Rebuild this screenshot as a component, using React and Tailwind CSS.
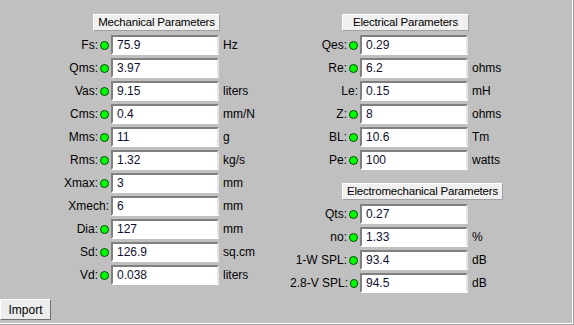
import React from "react";

const mechanical = [
	{ label: "Fs:", value: "75.9", unit: "Hz", led: true },
	{ label: "Qms:", value: "3.97", unit: "", led: true },
	{ label: "Vas:", value: "9.15", unit: "liters", led: true },
	{ label: "Cms:", value: "0.4", unit: "mm/N", led: true },
	{ label: "Mms:", value: "11", unit: "g", led: true },
	{ label: "Rms:", value: "1.32", unit: "kg/s", led: true },
	{ label: "Xmax:", value: "3", unit: "mm", led: true },
	{ label: "Xmech:", value: "6", unit: "mm", led: false },
	{ label: "Dia:", value: "127", unit: "mm", led: true },
	{ label: "Sd:", value: "126.9", unit: "sq.cm", led: true },
	{ label: "Vd:", value: "0.038", unit: "liters", led: true },
];

const electrical = [
	{ label: "Qes:", value: "0.29", unit: "", led: true },
	{ label: "Re:", value: "6.2", unit: "ohms", led: true },
	{ label: "Le:", value: "0.15", unit: "mH", led: false },
	{ label: "Z:", value: "8", unit: "ohms", led: true },
	{ label: "BL:", value: "10.6", unit: "Tm", led: true },
	{ label: "Pe:", value: "100", unit: "watts", led: true },
];

const electromechanical = [
	{ label: "Qts:", value: "0.27", unit: "", led: true },
	{ label: "no:", value: "1.33", unit: "%", led: true },
	{ label: "1-W SPL:", value: "93.4", unit: "dB", led: true },
	{ label: "2.8-V SPL:", value: "94.5", unit: "dB", led: true },
];

const Header = ({ children, className }) => (
	<div
		className={`h-[17px] flex items-center justify-center whitespace-nowrap text-[11.5px] tracking-[-0.2px] bg-[#f0f0f0] border-t border-l border-t-white border-l-white border-r border-b border-r-[#a0a0a0] border-b-[#a0a0a0] ${className}`}
	>
		{children}
	</div>
);

const Row = ({ item, labelWidth }) => (
	<div className="flex items-center h-[20px]">
		<div className="flex items-center justify-end" style={{ width: labelWidth }}>
			<span className="whitespace-nowrap">{item.label}</span>
			{item.led && (
				<span className="block ml-[2px] w-[9px] h-[9px] rounded-full bg-[#00ff00] border border-[#0a4a0a]" />
			)}
		</div>
		<div className="ml-[2px] w-[108px] h-[20px] bg-white border-2 border-t-[#808080] border-l-[#808080] border-r-[#e4e4e4] border-b-white flex items-center pl-[4px] text-[#101030]">
			{item.value}
		</div>
		<span className="ml-[4px]">{item.unit}</span>
	</div>
);

export default function App() {
	return (
		<div
			className="w-[574px] h-[325px] bg-[#c0c0c0] border-r border-b border-[#a0a0a0] text-[12px] text-black"
			style={{ fontFamily: '"Liberation Sans", Arial, sans-serif' }}
		>
			<div className="w-[573px] h-[324px] border-r border-b border-white flex flex-col">
				<div className="flex pt-[14px]">
					{/* Mechanical */}
					<div className="w-[290px] flex flex-col">
						<Header className="ml-[93px] w-[127px] mb-[4px]">
							Mechanical Parameters
						</Header>
						<div className="flex flex-col gap-[3px]">
							{mechanical.map((item) => (
								<Row key={item.label} item={item} labelWidth={109} />
							))}
						</div>
					</div>

					{/* Electrical + Electromechanical */}
					<div className="flex flex-col">
						<Header className="ml-[52px] w-[127px] mb-[4px]">
							Electrical Parameters
						</Header>
						<div className="flex flex-col gap-[3px]">
							{electrical.map((item) => (
								<Row key={item.label} item={item} labelWidth={68} />
							))}
						</div>
						<Header className="ml-[52px] w-[161px] mt-[13px] mb-[4px]">
							Electromechanical Parameters
						</Header>
						<div className="flex flex-col gap-[3px]">
							{electromechanical.map((item) => (
								<Row key={item.label} item={item} labelWidth={68} />
							))}
						</div>
					</div>
				</div>

				<div className="mt-auto mb-[3px]">
					<button className="w-[51px] h-[21px] bg-[#ececec] border border-t-white border-l-white border-r-[#707070] border-b-[#707070]">
						Import
					</button>
				</div>
			</div>
		</div>
	);
}
